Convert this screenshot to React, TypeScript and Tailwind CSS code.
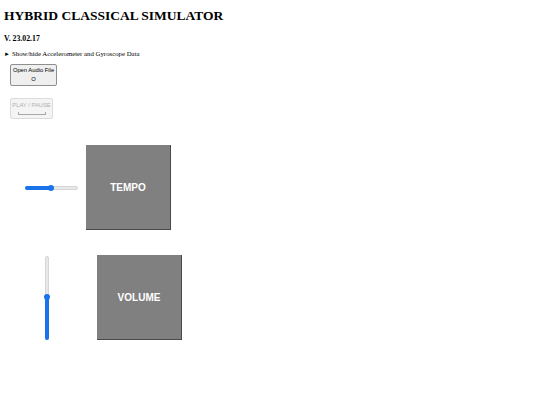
import React from 'react';

function HSlider() {
    return (
        <div className="relative w-[53px] h-[7px] flex items-center">
            <div className="w-full h-[4px] rounded-full bg-[#e8e8e8] border border-[#d6d6d6]" />
            <div className="absolute left-0 h-[4px] w-[27px] rounded-full bg-[#1a73e8]" />
            <div className="absolute left-[23px] w-[6px] h-[6px] rounded-full bg-[#1a73e8]" />
        </div>
    );
}

function VSlider() {
    return (
        <div className="relative w-[7px] h-[84px] flex justify-center">
            <div className="h-full w-[4px] rounded-full bg-[#e8e8e8] border border-[#d6d6d6]" />
            <div className="absolute bottom-0 w-[4px] h-[44px] rounded-full bg-[#1a73e8]" />
            <div className="absolute top-[38px] w-[6px] h-[6px] rounded-full bg-[#1a73e8]" />
        </div>
    );
}

function Pad({ label }: { label: string }) {
    return (
        <div className="w-[85px] h-[85px] bg-[#808080] border-r border-b border-[#4a4a4a] flex items-center justify-center">
            <span className="text-white font-bold text-[10px] font-['Liberation_Sans',Arial,sans-serif]">{label}</span>
        </div>
    );
}

export default function App() {
    return (
        <div className="w-[540px] h-[405px] bg-white px-[4px] font-['Liberation_Serif','Times_New_Roman',serif] text-black">
            <h1 className="pt-[8px] text-[13.5px] font-bold leading-[16px]">HYBRID CLASSICAL SIMULATOR</h1>
            <h3 className="mt-[10px] text-[7.8px] font-bold leading-[9px]">V. 23.02.17</h3>
            <div className="mt-[7px] flex items-center gap-[2px] text-[6.8px] leading-[8px]">
                <span className="text-[6px]">&#9658;</span>
                <span>Show/hide Accelerometer and Gyroscope Data</span>
            </div>
            <div className="pl-[6px] mt-[6px] flex flex-col items-start font-['Liberation_Sans',Arial,sans-serif]">
                <button className="w-[47px] h-[22px] rounded-[2px] border border-[#8f8f8f] bg-[#efefef] flex flex-col items-center justify-center gap-[2px] text-[5.8px] leading-[7px] text-black">
                    <span>Open Audio File</span>
                    <span>O</span>
                </button>
                <button disabled className="mt-[12px] w-[43px] h-[21px] rounded-[2px] border border-[#dcdcdc] bg-[#f4f4f4] flex flex-col items-center justify-center gap-[3px] text-[5.8px] leading-[7px] text-[#b0b0b0]">
                    <span>PLAY / PAUSE</span>
                    <span className="w-[28px] h-[3px] border-l border-r border-b border-[#a8a8a8]" />
                </button>
            </div>
            <div className="mt-[26px] flex items-center">
                <div className="ml-[21px] mr-[8px]">
                    <HSlider />
                </div>
                <Pad label="TEMPO" />
            </div>
            <div className="mt-[25px] flex items-center">
                <div className="ml-[39px] mr-[47px]">
                    <VSlider />
                </div>
                <Pad label="VOLUME" />
            </div>
        </div>
    );
}
